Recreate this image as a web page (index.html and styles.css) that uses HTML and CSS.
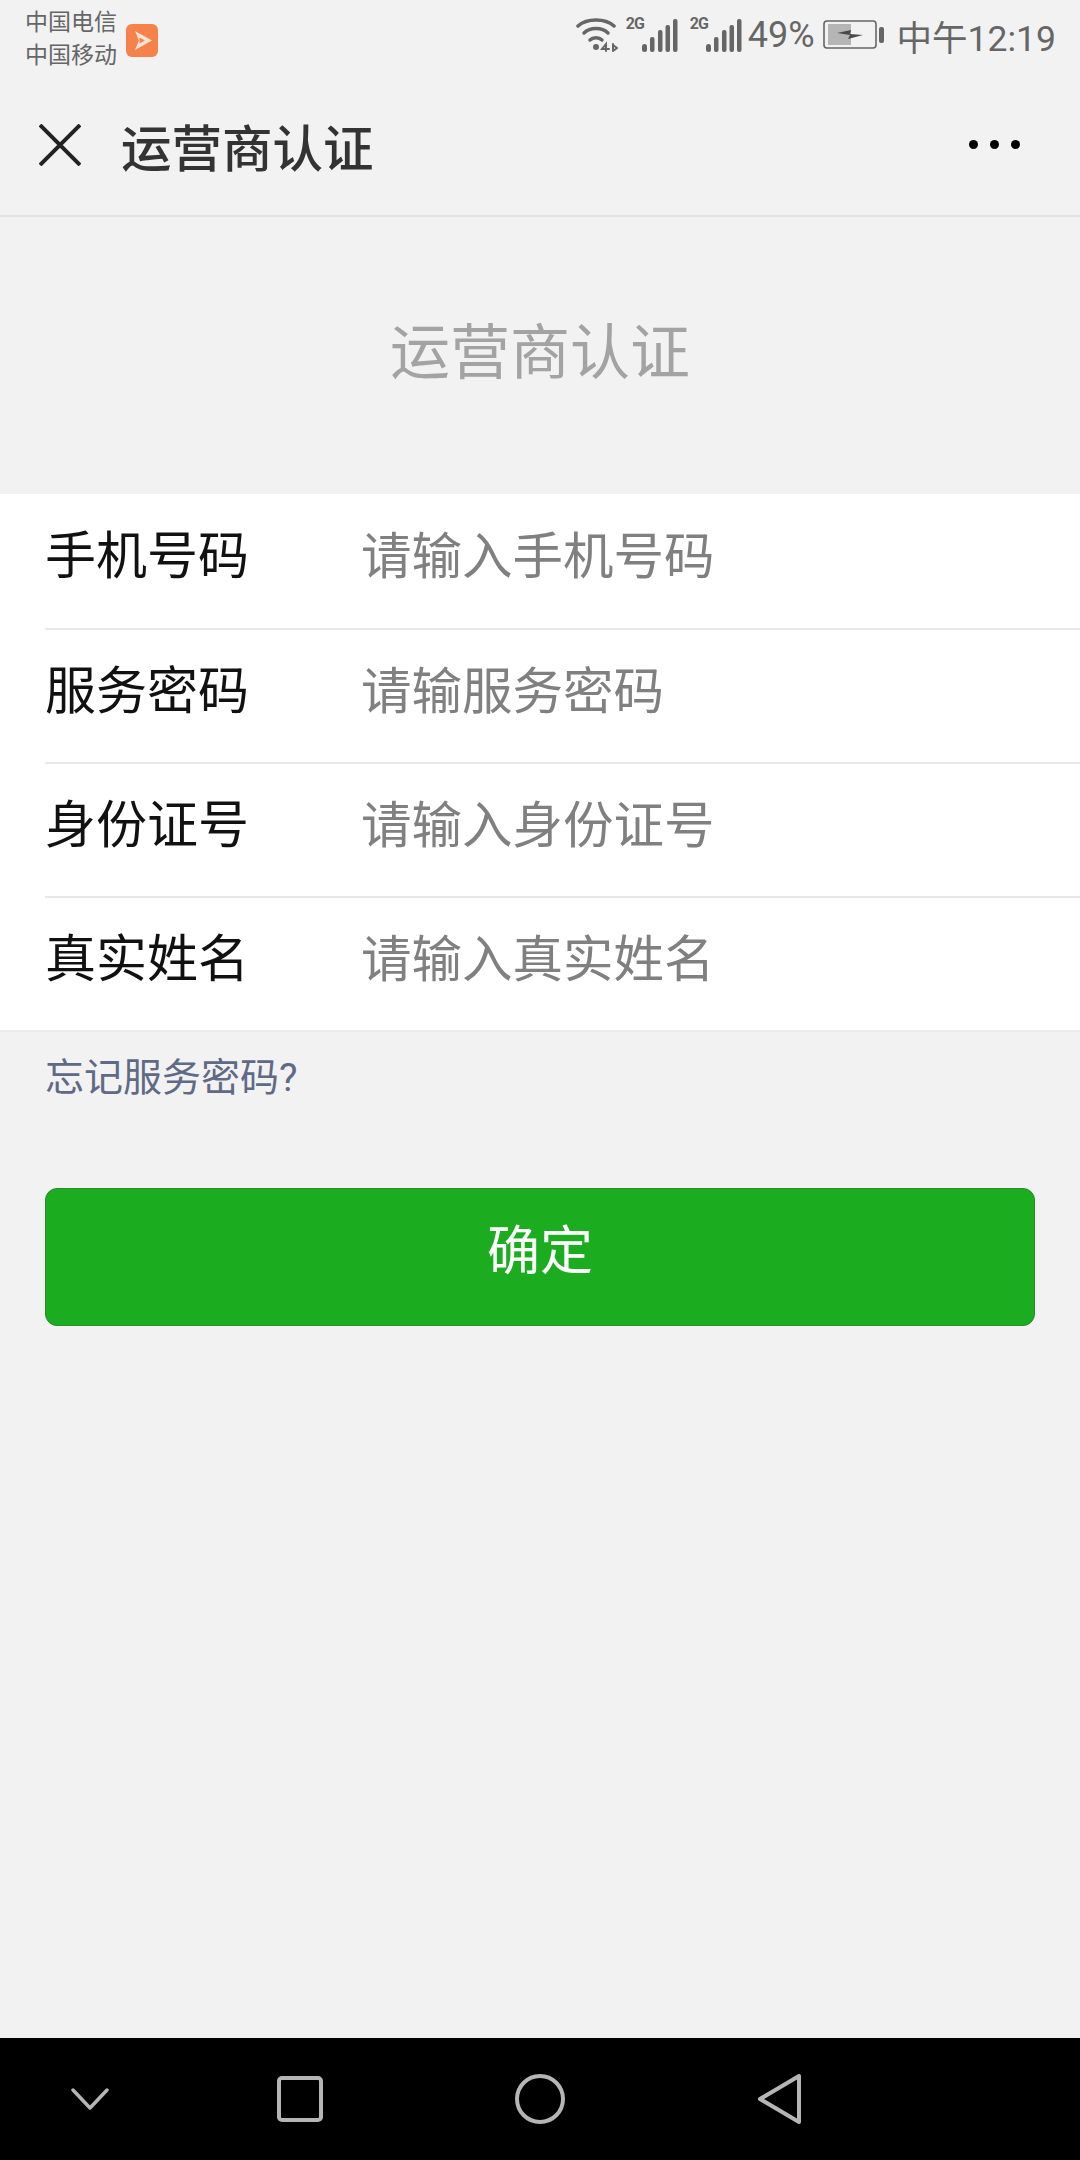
FILE: index.html
```html
<!DOCTYPE html>
<html lang="zh-CN">
<head>
  <meta charset="UTF-8">
  <meta name="viewport" content="width=device-width, initial-scale=1.0">
  <title>运营商认证</title>
  <link rel="stylesheet" href="styles.css">
</head>
<body>

  <div class="status-bar">
    <div class="carriers">
      <span>中国电信</span>
      <span>中国移动</span>
    </div>
    <svg class="app-badge" width="34" height="34" viewBox="0 0 34 34">
      <rect x="1" y="1" width="32" height="33" rx="6" fill="#f5814b"/>
      <path d="M10 8 L27 17.5 L10 27 L14 17.5 Z" fill="#fbe3d4"/>
      <path d="M14.5 14.5 L20 17.5 L14.5 20.5 Z" fill="#f5814b"/>
    </svg>
    <div class="status-right">
      <svg class="wifi" width="42" height="36" viewBox="0 0 42 36" fill="none" stroke="#666" stroke-linecap="round">
        <path d="M2 9 C11 1 29 1 38 9" stroke-width="3.5"/>
        <path d="M8 16 C14 10 26 10 32 16" stroke-width="3.5"/>
        <path d="M14 23 C17 20 23 20 26 23" stroke-width="3.5"/>
        <circle cx="20" cy="30" r="3" fill="#666" stroke="none"/>
        <path d="M30 34 V27 L26 32 H33 M37 27 V34 M37 28 L41 31 L37 34" stroke-width="2"/>
      </svg>
      <div class="signal">
        <span class="net">2G</span>
        <svg width="36" height="33" viewBox="0 0 36 33" fill="#666">
          <rect x="0" y="25" width="5" height="8" rx="2.5"/>
          <rect x="8" y="18" width="4.5" height="15" rx="2"/>
          <rect x="16" y="11" width="4.5" height="22" rx="2"/>
          <rect x="23.5" y="6" width="4.5" height="27" rx="2"/>
          <rect x="31" y="0" width="4.5" height="33" rx="2"/>
        </svg>
      </div>
      <div class="signal">
        <span class="net">2G</span>
        <svg width="36" height="33" viewBox="0 0 36 33" fill="#666">
          <rect x="0" y="25" width="5" height="8" rx="2.5"/>
          <rect x="8" y="18" width="4.5" height="15" rx="2"/>
          <rect x="16" y="11" width="4.5" height="22" rx="2"/>
          <rect x="23.5" y="6" width="4.5" height="27" rx="2"/>
          <rect x="31" y="0" width="4.5" height="33" rx="2"/>
        </svg>
      </div>
      <span class="battery-pct">49%</span>
      <svg class="battery" width="62" height="30" viewBox="0 0 62 30">
        <rect x="1" y="1" width="52" height="27" rx="3" fill="none" stroke="#666" stroke-width="1.6"/>
        <rect x="5" y="4" width="23" height="21" fill="#b5b5b5"/>
        <path d="M14 13 L28 10 L27 14 L40 15 L25 19 L27 15 Z" fill="#4a4a4a"/>
        <rect x="56" y="7" width="5" height="16" rx="2" fill="#666"/>
      </svg>
      <span class="clock">中午12:19</span>
    </div>
  </div>

  <div class="nav-bar">
    <svg class="nav-close" width="42" height="42" viewBox="0 0 42 42" stroke="#222" stroke-width="4">
      <path d="M1 1 L41 41 M41 1 L1 41"/>
    </svg>
    <span class="nav-title">运营商认证</span>
    <div class="nav-dots">
      <i></i><i></i><i></i>
    </div>
  </div>

  <h1 class="page-title">运营商认证</h1>

  <div class="form">
    <div class="row">
      <span class="label">手机号码</span>
      <span class="hint">请输入手机号码</span>
    </div>
    <div class="row">
      <span class="label">服务密码</span>
      <span class="hint">请输服务密码</span>
    </div>
    <div class="row">
      <span class="label">身份证号</span>
      <span class="hint">请输入身份证号</span>
    </div>
    <div class="row">
      <span class="label">真实姓名</span>
      <span class="hint">请输入真实姓名</span>
    </div>
  </div>

  <a class="forgot">忘记服务密码?</a>

  <button class="btn-ok">确定</button>

  <div class="spacer"></div>

  <div class="sys-nav">
    <svg width="38" height="22" viewBox="0 0 38 22" fill="none" stroke="#b5b5b5" stroke-width="3.5" stroke-linecap="round" stroke-linejoin="round">
      <path d="M2 2 L19 20 L36 2"/>
    </svg>
    <svg width="46" height="46" viewBox="0 0 46 46" fill="none" stroke="#b5b5b5" stroke-width="4">
      <rect x="2" y="2" width="42" height="42" rx="3"/>
    </svg>
    <svg width="50" height="50" viewBox="0 0 50 50" fill="none" stroke="#b5b5b5" stroke-width="4">
      <circle cx="25" cy="25" r="23"/>
    </svg>
    <svg width="44" height="50" viewBox="0 0 44 50" fill="none" stroke="#b5b5b5" stroke-width="4" stroke-linejoin="round">
      <path d="M41 2 V48 L2 25 Z"/>
    </svg>
  </div>

</body>
</html>
```

FILE: styles.css
```css
body {
  margin: 0;
  width: 1080px;
  height: 2160px;
  display: flex;
  flex-direction: column;
  background-color: #f2f2f3;
  font-family: Roboto, 'Noto Sans CJK SC', sans-serif;
  overflow: hidden;
}

.status-bar {
  height: 78px;
  display: flex;
  align-items: center;
  padding: 0 24px 0 25px;
  color: #666;
}

.carriers {
  display: flex;
  flex-direction: column;
  font-size: 23px;
  line-height: 33px;
}

.app-badge {
  margin: 1px 0 0 8px;
}

.status-right {
  margin-left: auto;
  margin-bottom: 8px;
  display: flex;
  align-items: center;
}

.wifi {
  margin-right: 8px;
}

.signal {
  position: relative;
  display: flex;
  align-items: flex-end;
  justify-content: flex-end;
  width: 52px;
  height: 33px;
  margin-right: 12px;
}

.signal + .signal {
  margin-right: 6px;
}

.net {
  position: absolute;
  left: 0;
  top: -3px;
  font-size: 16px;
  line-height: 16px;
  letter-spacing: -1px;
  font-weight: 700;
  color: #666;
}

.battery-pct {
  font-size: 36px;
}

.battery {
  margin: 0 12px 0 8px;
}

.clock {
  font-size: 35.5px;
}

.nav-bar {
  height: 139px;
  box-sizing: border-box;
  display: flex;
  align-items: center;
  padding: 0 0 4px 39px;
  border-bottom: 2px solid #e2e2e2;
}

.nav-title {
  margin-left: 40px;
  font-size: 50.5px;
  font-weight: 500;
  color: #333;
}

.nav-dots {
  margin-left: auto;
  margin-right: 60px;
  display: flex;
  gap: 12px;
}

.nav-dots i {
  width: 9px;
  height: 9px;
  border-radius: 50%;
  background: #000;
}

.page-title {
  margin: 0;
  height: 277px;
  box-sizing: border-box;
  padding-bottom: 16px;
  display: flex;
  align-items: center;
  justify-content: center;
  font-size: 60px;
  font-weight: 400;
  color: #a3a3a3;
}

.form {
  background: #fff;
  padding-left: 45px;
  border-bottom: 2px solid #ebebeb;
}

.row {
  height: 134px;
  box-sizing: border-box;
  padding-bottom: 18px;
  display: flex;
  align-items: center;
  border-top: 2px solid #e8e8e8;
  font-size: 51px;
}

.row:first-child {
  border-top: none;
}

.label {
  width: 316px;
  color: #111;
}

.hint {
  font-size: 50.5px;
  color: #808080;
}

.forgot {
  margin: 18px 0 0 45px;
  font-size: 39px;
  line-height: 56px;
  color: #5f6a85;
}

.btn-ok {
  margin: 82px 45px 0;
  height: 138px;
  padding: 0 0 20px;
  border: 1px solid #2a8a28;
  border-radius: 12px;
  background: #1cac20;
  color: #fff;
  font-family: inherit;
  font-size: 53px;
}

.spacer {
  flex: 1;
}

.sys-nav {
  height: 122px;
  background: #000;
  display: flex;
  align-items: center;
}

.sys-nav svg:nth-child(1) { margin-left: 71px; }
.sys-nav svg:nth-child(2) { margin-left: 168px; }
.sys-nav svg:nth-child(3) { margin-left: 192px; }
.sys-nav svg:nth-child(4) { margin-left: 193px; }
```
